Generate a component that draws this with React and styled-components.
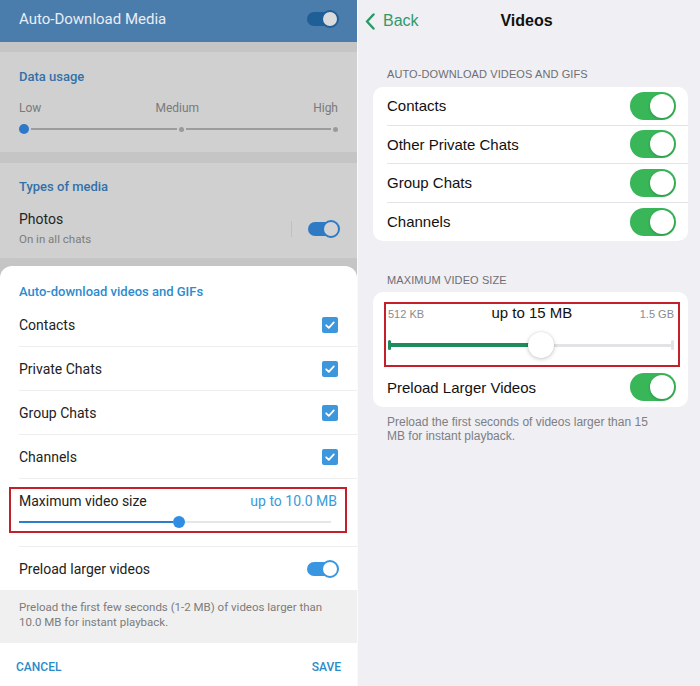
import styled, { createGlobalStyle } from "styled-components";

const Global = createGlobalStyle`
  html, body { margin: 0; padding: 0; background: #ffffff; }
  * { box-sizing: border-box; }
`;

const Page = styled.div`
  display: flex;
  width: 700px;
  height: 686px;
  overflow: hidden;
  gap: 1px;
  background: #fafafa;
`;

/* ---------- Android side ---------- */

const Android = styled.div`
  width: 357px;
  height: 686px;
  display: flex;
  flex-direction: column;
  font-family: Roboto, "Liberation Sans", sans-serif;
  background: #c5c5c5;
`;

const AppBar = styled.div`
  height: 42px;
  flex-shrink: 0;
  background: #4a7cac;
  display: flex;
  align-items: center;
  justify-content: space-between;
  padding: 0 20px 5px 19px;
  color: #e9eef4;
  font-size: 15px;
  font-weight: 400;
`;

const Dim = styled.div`
  background: #d0d0d0;
  margin-top: ${(p) => p.$top}px;
  height: ${(p) => p.$h}px;
  padding: 0 19px;
  display: flex;
  flex-direction: column;
`;

const DimTitle = styled.div`
  color: #3370a8;
  font-size: 13px;
  font-weight: 500;
  margin-top: ${(p) => p.$top}px;
  line-height: 16px;
`;

const Levels = styled.div`
  display: flex;
  justify-content: space-between;
  color: #7a7a7a;
  font-size: 12px;
  margin-top: 16px;
  line-height: 14px;
`;

const DataSlider = styled.div`
  height: 10px;
  margin-top: 9px;
  display: flex;
  align-items: center;
`;

const Line = styled.div`
  flex: 1;
  height: 2px;
  background: #9c9c9c;
  margin: 0 2px;
`;

const Dot = styled.div`
  width: ${(p) => p.$size}px;
  height: ${(p) => p.$size}px;
  border-radius: 50%;
  background: ${(p) => p.$color};
  flex-shrink: 0;
`;

const PhotoRow = styled.div`
  display: flex;
  align-items: center;
  margin-top: 15px;
  padding-bottom: 11px;
  border-bottom: 1px solid #c6c6c6;
  margin-right: -19px;
  padding-right: 19px;
`;

const PhotoText = styled.div`
  flex: 1;
  display: flex;
  flex-direction: column;
`;

const PhotoName = styled.div`
  font-size: 14px;
  color: #242424;
  line-height: 18px;
`;

const PhotoSub = styled.div`
  font-size: 11.5px;
  color: #7c7c7c;
  line-height: 16px;
  margin-top: 3px;
`;

const VBar = styled.div`
  width: 1px;
  height: 16px;
  background: #c0c0c0;
  margin-right: 16px;
`;

const ToggleTrack = styled.div`
  width: 30px;
  height: 14px;
  border-radius: 7px;
  background: ${(p) => p.$track};
  position: relative;
  flex-shrink: 0;
`;

const ToggleKnob = styled.div`
  position: absolute;
  right: -2px;
  top: -2px;
  width: 18px;
  height: 18px;
  border-radius: 50%;
  background: ${(p) => p.$knob};
  border: 2px solid ${(p) => p.$ring};
`;

function MiniToggle({ track, knob, ring }) {
  return (
    <ToggleTrack $track={track}>
      <ToggleKnob $knob={knob} $ring={ring} />
    </ToggleTrack>
  );
}

const Sheet = styled.div`
  flex: 1;
  margin-top: 8px;
  background: #ffffff;
  border-radius: 12px 12px 0 0;
  display: flex;
  flex-direction: column;
`;

const SheetTitle = styled.div`
  height: 37px;
  padding: 18px 19px 0;
  color: #2b8ccf;
  font-size: 13px;
  font-weight: 500;
  line-height: 16px;
`;

const CheckRow = styled.div`
  height: 44px;
  margin-left: 19px;
  padding-right: 19px;
  display: flex;
  align-items: center;
  justify-content: space-between;
  border-bottom: 1px solid #eeeeee;
  font-size: 14px;
  color: #222222;
`;

const Box = styled.div`
  width: 16px;
  height: 16px;
  border-radius: 2px;
  background: #3d97dc;
  display: flex;
  align-items: center;
  justify-content: center;
`;

function Check() {
  return (
    <Box>
      <svg width="12" height="12" viewBox="0 0 12 12">
        <path d="M2.2 6.3 L4.8 8.8 L9.8 3.4" fill="none" stroke="#fff" strokeWidth="1.8" strokeLinecap="round" strokeLinejoin="round" />
      </svg>
    </Box>
  );
}

const SizeRow = styled.div`
  height: 68px;
  margin-left: 19px;
  border-bottom: 1px solid #eeeeee;
  padding-top: 8px;
`;

const RedBox = styled.div`
  border: 2px solid #c4202c;
  margin: ${(p) => p.$m};
  height: ${(p) => p.$h}px;
  padding: ${(p) => p.$pad};
`;

const SizeHead = styled.div`
  display: flex;
  justify-content: space-between;
  align-items: center;
  font-size: 14px;
  color: #222;
  line-height: 18px;
`;

const Blue = styled.span`
  color: #3a9ad8;
  font-size: 14px;
`;

const Track = styled.div`
  margin-top: 6px;
  height: 12px;
  display: flex;
  align-items: center;
  margin-right: 6px;
`;

const Fill = styled.div`
  height: ${(p) => p.$h || 2}px;
  width: ${(p) => p.$w}px;
  background: ${(p) => p.$c};
  flex-shrink: 0;
`;

const Rest = styled.div`
  height: ${(p) => p.$h || 2}px;
  flex: 1;
  background: ${(p) => p.$c};
`;

const PreloadRow = styled.div`
  height: 43px;
  padding: 0 20px 0 19px;
  display: flex;
  align-items: center;
  justify-content: space-between;
  font-size: 14px;
  color: #222;
`;

const Info = styled.div`
  height: 53px;
  background: #f0f0f0;
  padding: 10px 19px 0;
  font-size: 11.5px;
  line-height: 15px;
  color: #7c7c7c;
`;

const Actions = styled.div`
  flex: 1;
  display: flex;
  align-items: center;
  justify-content: space-between;
  padding: 4px 16px 0 16px;
  color: #2b8bc9;
  font-size: 12px;
  font-weight: 500;
`;

/* ---------- iOS side ---------- */

const Ios = styled.div`
  flex: 1;
  background: #efeff4;
  font-family: "Liberation Sans", Arial, sans-serif;
  display: flex;
  flex-direction: column;
  padding: 0 12px 0 15px;
`;

const NavBar = styled.div`
  height: 42px;
  display: grid;
  grid-template-columns: 1fr auto 1fr;
  align-items: center;
  margin-left: -8px;
`;

const BackBtn = styled.div`
  display: flex;
  align-items: center;
  gap: 8px;
  color: #2f9a6c;
  font-size: 16px;
`;

const NavTitle = styled.div`
  font-size: 16px;
  font-weight: 700;
  color: #111;
`;

const Caption = styled.div`
  color: #6e6e73;
  font-size: 11px;
  text-transform: uppercase;
  padding-left: 14px;
  margin-top: ${(p) => p.$top}px;
  line-height: 14px;
  letter-spacing: 0.1px;
`;

const Card = styled.div`
  background: #ffffff;
  border-radius: 10px;
  margin-top: ${(p) => p.$top}px;
  overflow: hidden;
`;

const IosRow = styled.div`
  height: ${(p) => p.$h || 38.5}px;
  margin-left: 14px;
  padding-right: 12px;
  display: flex;
  align-items: center;
  justify-content: space-between;
  font-size: 15px;
  color: #111;
  border-bottom: ${(p) => (p.$last ? "none" : "1px solid #e4e4e8")};
`;

const Switch = styled.div`
  width: 46px;
  height: 28px;
  border-radius: 14px;
  background: #38b658;
  position: relative;
  &::after {
    content: "";
    position: absolute;
    right: 2px;
    top: 2px;
    width: 24px;
    height: 24px;
    border-radius: 50%;
    background: #fff;
    box-shadow: 0 1px 3px rgba(0, 0, 0, 0.2);
  }
`;

const Scale = styled.div`
  display: flex;
  justify-content: space-between;
  align-items: baseline;
  color: #8a8a8e;
  font-size: 11px;
  margin-top: 0;
`;

const ScaleValue = styled.span`
  color: #111;
  font-size: 15px;
`;

const IosTrack = styled.div`
  position: relative;
  margin-top: 11px;
  height: 26px;
  display: flex;
  align-items: center;
`;

const Tick = styled.div`
  width: 3px;
  height: 10px;
  border-radius: 1.5px;
  background: ${(p) => p.$c};
  flex-shrink: 0;
`;

const Thumb = styled.div`
  position: absolute;
  left: 140px;
  top: 0;
  width: 26px;
  height: 26px;
  border-radius: 50%;
  background: #fff;
  box-shadow: 0 1px 4px rgba(0, 0, 0, 0.22), 0 0 0 0.5px rgba(0, 0, 0, 0.06);
`;

const Footnote = styled.div`
  color: #7e7e83;
  font-size: 12px;
  line-height: 14px;
  padding: 8px 14px 0;
`;

export default function App() {
  const rows = ["Contacts", "Private Chats", "Group Chats", "Channels"];
  const iosRows = ["Contacts", "Other Private Chats", "Group Chats", "Channels"];
  return (
    <Page>
      <Global />
      <Android>
        <AppBar>
          Auto-Download Media
          <MiniToggle track="#1f5f97" knob="#d9dbdd" ring="#1f5f97" />
        </AppBar>
        <Dim $top={10} $h={100}>
          <DimTitle $top={17}>Data usage</DimTitle>
          <Levels>
            <span>Low</span>
            <span>Medium</span>
            <span>High</span>
          </Levels>
          <DataSlider>
            <Dot $size={10} $color="#2e78c8" />
            <Line />
            <Dot $size={5} $color="#9a9a9a" />
            <Line />
            <Dot $size={5} $color="#9a9a9a" />
          </DataSlider>
        </Dim>
        <Dim $top={11} $h={95}>
          <DimTitle $top={16}>Types of media</DimTitle>
          <PhotoRow>
            <PhotoText>
              <PhotoName>Photos</PhotoName>
              <PhotoSub>On in all chats</PhotoSub>
            </PhotoText>
            <VBar />
            <MiniToggle track="#2f7ac4" knob="#d3d3d3" ring="#2f7ac4" />
          </PhotoRow>
        </Dim>
        <Sheet>
          <SheetTitle>Auto-download videos and GIFs</SheetTitle>
          {rows.map((r) => (
            <CheckRow key={r}>
              {r}
              <Check />
            </CheckRow>
          ))}
          <SizeRow>
            <RedBox $m="0 10px 0 -10px" $h={46} $pad="3px 8px 0 8px">
              <SizeHead>
                Maximum video size
                <Blue>up to 10.0 MB</Blue>
              </SizeHead>
              <Track>
                <Fill $w={154} $c="#2a7fc8" />
                <Dot $size={12} $color="#2f8de4" />
                <Rest $c="#e6e6e6" />
              </Track>
            </RedBox>
          </SizeRow>
          <PreloadRow>
            Preload larger videos
            <MiniToggle track="#3a96e0" knob="#ffffff" ring="#3a96e0" />
          </PreloadRow>
          <Info>
            Preload the first few seconds (1-2 MB) of videos larger than 10.0 MB for instant playback.
          </Info>
          <Actions>
            <span>CANCEL</span>
            <span>SAVE</span>
          </Actions>
        </Sheet>
      </Android>

      <Ios>
        <NavBar>
          <BackBtn>
            <svg width="10" height="17" viewBox="0 0 10 17">
              <path d="M8.5 1.5 L2 8.5 L8.5 15.5" fill="none" stroke="#2a9968" strokeWidth="2.4" strokeLinecap="round" strokeLinejoin="round" />
            </svg>
            Back
          </BackBtn>
          <NavTitle>Videos</NavTitle>
          <span />
        </NavBar>
        <Caption $top={25}>Auto-Download Videos and GIFs</Caption>
        <Card $top={6}>
          {iosRows.map((r, i) => (
            <IosRow key={r} $last={i === iosRows.length - 1}>
              {r}
              <Switch />
            </IosRow>
          ))}
        </Card>
        <Caption $top={32}>Maximum Video Size</Caption>
        <Card $top={5}>
          <RedBox $m="10px 8px 0 11px" $h={65} $pad="0 4px 0 2px">
            <Scale>
              <span>512 KB</span>
              <ScaleValue>up to 15 MB</ScaleValue>
              <span>1.5 GB</span>
            </Scale>
            <IosTrack>
              <Tick $c="#1f8c5d" />
              <Fill $w={140} $h={4} $c="#1f8c5d" />
              <Rest $h={3} $c="#e3e3e6" />
              <Tick $c="#e3e3e6" />
              <Thumb />
            </IosTrack>
          </RedBox>
          <IosRow $last $h={40}>
            Preload Larger Videos
            <Switch />
          </IosRow>
        </Card>
        <Footnote>
          Preload the first seconds of videos larger than 15
          <br />
          MB for instant playback.
        </Footnote>
      </Ios>
    </Page>
  );
}
